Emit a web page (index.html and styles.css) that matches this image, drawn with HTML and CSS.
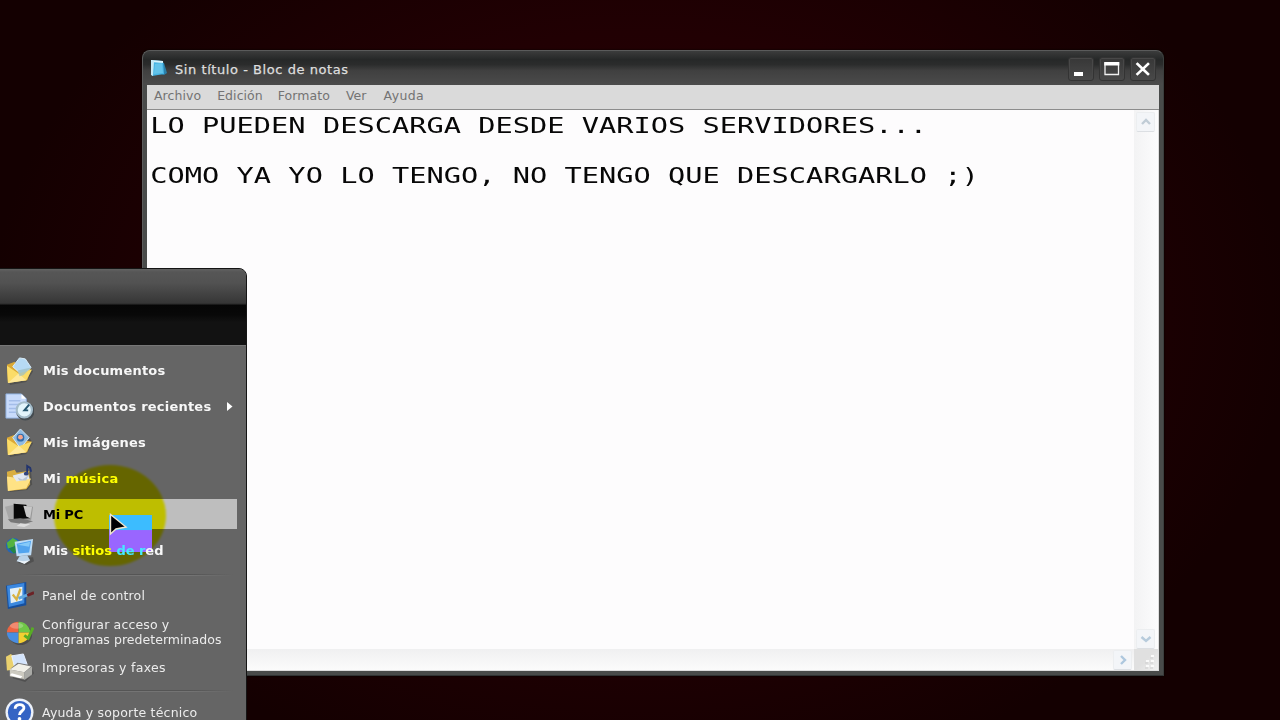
FILE: index.html
```
<!DOCTYPE html>
<html lang="es">
<head>
<meta charset="utf-8">
<title>Sin título - Bloc de notas</title>
<link rel="stylesheet" href="styles.css">
</head>
<body>
<main class="desktop">
  <section class="window">
    <header class="titlebar">
      <svg class="app-icon" width="18" height="18" viewBox="0 0 18 18"><path d="M11 3l3 1 3 10-3 2-3-1z" fill="#2b7fa9"/><path d="M1 1l12 1 1 13-12 2z" fill="#45b4e4"/><path d="M1 1l12 1v2L1 3z" fill="#d7f2fb"/><path d="M1 2h3L3 17l-2-1z" fill="#c5e9f5"/><path d="M5 5l7-1 1 10-9 1z" fill="#62c3ea"/></svg>
      <h1 class="title">Sin título - Bloc de notas</h1>
      <div class="controls">
        <span class="control"><svg width="26" height="24"><path d="M6 15h9v4H6z" fill="#fff"/></svg></span>
        <span class="control"><svg width="26" height="24"><path d="M6 6h13.500v11.500h-13.500z" fill="none" stroke="#f2f2f2" stroke-width="1.300"/><path d="M5.300 5h15v3.500h-15z" fill="#fff"/></svg></span>
        <span class="control"><svg width="26" height="24"><path d="M7.500 7l10.500 10M18 7L7.500 17" stroke="#fff" stroke-width="2.600" stroke-linecap="square"/></svg></span>
      </div>
    </header>
    <nav class="menubar"><span>Archivo</span><span>Edición</span><span>Formato</span><span>Ver</span><span>Ayuda</span></nav>
    <div class="editor">
      <div class="text">LO PUEDEN DESCARGA DESDE VARIOS SERVIDORES...

COMO YA YO LO TENGO, NO TENGO QUE DESCARGARLO ;)</div>
      <div class="vscroll">
        <span class="arrow"><svg width="20" height="20"><path d="M6 12l4-4 4 4" fill="none" stroke="#c0ccd6" stroke-width="2.400"/></svg></span>
        <span class="arrow"><svg width="20" height="20"><path d="M5.500 8l4.500 4 4.500-4" fill="none" stroke="#b7cbdc" stroke-width="2.400"/></svg></span>
      </div>
      <div class="hscroll"><span class="arrow"><svg width="20" height="20"><path d="M8 6l4 4-4 4" fill="none" stroke="#adc7de" stroke-width="2.400"/></svg></span></div>
      <div class="grip"><svg width="22" height="22"><path d="M17 7h3M12 12h3M17 12h3M12 17h3M17 17h3" stroke="#fafafa" stroke-width="2"/><path d="M16 9h3M11 14h3M16 14h3M11 19h3M16 19h3" stroke="#cfcfcf"/></svg></div>
    </div>
  </section>

  <aside class="start">
    <div class="start-head"></div>
    <div class="start-body">
      <div class="row places"><svg class="icon" viewBox="0 0 30 30"><path d="M5 14l8-8 13 5 3 5-7 11-17 3z" fill="#3a3a36" opacity=".45"/><path d="M2 9l8-3 3 6 14 2-4 11L3 27z" fill="#d9a936"/><path d="M8 11l7-9 6 1 6 9-9 8z" fill="#b6daf4" stroke="#dceffc"/><path d="M2 10l12 8 14-4-6 11-19 3z" fill="#fbdc68"/><path d="M3 28l11-10 8 7z" fill="#ffe99b"/><path d="M13 15l14-3-8 8-4 1z" fill="#9fc0c4" opacity=".75"/></svg><span class="label">Mis documentos</span></div>
      <div class="row places"><svg class="icon" viewBox="0 0 30 30"><path d="M1 2h16l5 5v20H1z" fill="#c8dbfb" stroke="#8fb0e0"/><path d="M17 2v5h5" fill="#fff"/><path d="M4 9h12M4 13h10M4 17h8M4 21h8" stroke="#a3bde9" stroke-width="1.500"/><circle cx="21" cy="20" r="9.500" fill="#444b50"/><circle cx="20" cy="18.500" r="9" fill="#a3bbc9"/><circle cx="20" cy="18.500" r="6.800" fill="#e2f4fb"/><path d="M25 13l-5 6h4" fill="none" stroke="#25566f" stroke-width="2"/></svg><span class="label">Documentos recientes</span><svg class="more" width="6" height="9"><path d="M0 0l5.500 4.500L0 9z" fill="#fff"/></svg></div>
      <div class="row places"><svg class="icon" viewBox="0 0 30 30"><path d="M5 14l8-8 13 5 3 5-7 11-17 3z" fill="#3a3a36" opacity=".45"/><path d="M2 10l8-3 3 5 14 2-4 11L3 28z" fill="#dba936"/><path d="M8 10l8-9 9 9-9 11z" fill="#8fbbe2" stroke="#d5e9fa"/><circle cx="16" cy="10" r="4" fill="#316dac"/><circle cx="16" cy="9.500" r="2.500" fill="#f4a38c"/><path d="M2 11l12 8 14-5-6 11-19 3z" fill="#fbdc68"/><path d="M3 28l11-10 8 7z" fill="#ffe99b"/></svg><span class="label">Mis imágenes</span></div>
      <div class="row places"><svg class="icon" viewBox="0 0 30 30"><path d="M5 12l22-4 1 13-5 6-18 2z" fill="#3a3a36" opacity=".45"/><path d="M2 8l8-2 2 3 13-2 1 14-4 5-19 2z" fill="#d9ae40"/><path d="M8 12l15-4 3 9-14 5z" fill="#e2e8f0"/><path d="M2 13l7 1 3 4 15-3-5 10-19 3z" fill="#ffe285"/><path d="M13 14l5 2 6-4-2 5h-7z" fill="#b9c5d5"/><path d="M23 10V2l3 2 1 4" fill="none" stroke="#22346e" stroke-width="2"/><ellipse cx="22" cy="10" rx="2.500" ry="2" fill="#31447e"/></svg><span class="label">Mi <b class="lit">música</b></span></div>
      <div class="row places selected"><svg class="icon" viewBox="0 0 30 30"><path d="M0 7l9-2v14l-5 1z" fill="#a7a7a7"/><path d="M9 4l20 3-2 14-17-1z" fill="#999"/><path d="M9 4l13 1 4 14-17 1z" fill="#080808"/><path d="M19 6l9 1-2 12-4-2z" fill="#c8c8c8"/><path d="M3 20l13-1 13 3-9 3-14-2z" fill="#777"/><path d="M16 24l10 1-6 3-8-1z" fill="#ddd"/></svg><span class="label">Mi PC</span></div>
      <div class="row places net"><svg class="icon" viewBox="0 0 30 30"><path d="M13 23l16-1 1 4-8 4-8-2z" fill="#333" opacity=".4"/><circle cx="9" cy="10" r="8" fill="#2466b5"/><path d="M2 7l6-5 5 3-4 6-6 2z" fill="#55b341"/><path d="M4 13l7-3 2 6-4 2z" fill="#248646"/><path d="M10 6l19-3-2 17-15 1z" fill="#bcdcf7"/><path d="M12 8l15-3-2 12-11 1z" fill="#52a4ee"/><path d="M13 9l13-3-1 5z" fill="#85caf9"/><path d="M15 21l8-1 3 5-7 3-7-2z" fill="#bad2e7"/><path d="M12 25l7 1 7-1-6 4z" fill="#ecf4fa"/></svg><span class="label">Mis <b class="lit">sitios</b> <b class="cyan">de r</b>ed</span></div>
      <div class="separator"></div>
      <div class="row tool"><svg class="icon" viewBox="0 0 30 30"><path d="M1 5l21-4v24L3 29z" fill="#164f9e"/><path d="M2 5l18-3v21L4 27z" fill="#3b88df"/><path d="M5 8l13-2v14L6 23z" fill="#e5f0f5"/><path d="M8 14l4 5 4-11" fill="none" stroke="#d8b343" stroke-width="2.400"/><path d="M14 18l10-4" stroke="#60a8df" stroke-width="3"/><path d="M23 15l7-3" stroke="#6c2125" stroke-width="3"/></svg><span class="label">Panel de control</span></div>
      <div class="row tool two"><svg class="icon" viewBox="0 0 30 30"><ellipse cx="16" cy="17" rx="12" ry="11" fill="#333" opacity=".5"/><path d="M14 15V4A12 11 0 0 0 2 15z" fill="#ed6542"/><path d="M14 15V4A12 11 0 0 1 26 15z" fill="#70c747"/><path d="M14 15v11A12 11 0 0 1 2 15z" fill="#498ee1"/><path d="M14 15v11A12 11 0 0 0 26 15z" fill="#f3cf32"/><ellipse cx="12" cy="8" rx="7" ry="3" fill="#fff" opacity=".25"/><path d="M20 18l4 3 5-11" fill="none" stroke="#58ac25" stroke-width="3"/></svg><span class="label">Configurar acceso y<br><i class="second">programas predeterminados</i></span></div>
      <div class="row tool printer"><svg class="icon" viewBox="0 0 30 30"><path d="M9 20l18-7 3 8-9 9-13-4z" fill="#333" opacity=".4"/><path d="M1 4l5-3 5 4v12l-9 1z" fill="#ead16e"/><path d="M7 3l12-2 4 11-13 3z" fill="#d3e4fc" stroke="#e8f1ff"/><path d="M6 16l7-6 15 3v10l-8 5-15-4z" fill="#777"/><path d="M5 17l9-6 13 3-7 6z" fill="#f1f0e8"/><path d="M5 17l15 3v7L5 24z" fill="#cccac0"/><path d="M20 20l8-6v8l-8 6z" fill="#a9aaa6"/><path d="M7 21l11 3-2 2-11-3z" fill="#fff"/></svg><span class="label">Impresoras y faxes</span></div>
      <div class="separator low"></div>
      <div class="row tool help"><svg class="icon" viewBox="0 0 30 30"><circle cx="15" cy="15" r="14.500" fill="#edf2fa"/><circle cx="15" cy="15" r="12" fill="#3564c4"/><path d="M10.500 11c0-6 10-5 9-.5 0 3-4.500 3-4.500 7" fill="none" stroke="#fff" stroke-width="3"/><circle cx="15" cy="21.500" r="1.900" fill="#fff"/></svg><span class="label">Ayuda y soporte técnico</span></div>
    </div>
    <div class="halo"></div>
    <div class="drag"></div>
    <svg class="pointer" width="20" height="24" viewBox="0 0 20 24"><path d="M1.500 1.500v19.500l5.500-5 10-2z" fill="#000" stroke="#f0e6cf" stroke-width="1.400"/></svg>
  </aside>
</main>
</body>
</html>
```
FILE: styles.css
```
* { box-sizing: border-box; }
body { margin: 0; font-family: "DejaVu Sans", sans-serif; }
.desktop { position: relative; width: 1280px; height: 720px; overflow: hidden; padding: 50px 0 0 142px; background: radial-gradient(ellipse 650px 480px at 640px 320px, #2c0005 0, #210003 60%, #140001 100%); }
.window { width: 1022px; height: 626px; padding: 0 4px 4px; display: flex; flex-direction: column; background: #494b4a; border: 1px solid #5a5b5b; border-bottom-color: #303333; border-right-color: #3b3e3d; border-radius: 8px 8px 0 0; box-shadow: 0 0 2px #000; }
.titlebar { flex: 0 0 34px; margin: 0 -4px; padding: 0 7px 0 7px; display: flex; align-items: center; border-radius: 7px 7px 0 0; background: linear-gradient(#3b3c3c 0, #262828 25%, #2b2c2c 40%, #404040 58%, #4b4b4b 100%); }
.app-icon { flex: none; }
.title { margin: 2px 0 0 7px; font-size: 13px; font-weight: 400; letter-spacing: .56px; color: #dedede; white-space: nowrap; -webkit-text-stroke: .25px #dedede; }
.controls { margin-left: auto; display: flex; gap: 5px; padding-top: 2px; }
.control { width: 26px; height: 24px; border: 1px solid #333; border-radius: 3px; background: linear-gradient(#373737, #494949); box-shadow: inset 0 0 0 1px #484848; display: flex; align-items: center; justify-content: center; }
.control svg { flex: none; }
.menubar { flex: 0 0 25px; display: flex; padding: 3px 0 0 7px; border-bottom: 1px solid #8c8c8c; background: #dadada; color: #737373; font-size: 12.5px; white-space: nowrap; }
.menubar span { margin-right: 16px; letter-spacing: .06px; }
.menubar span:nth-child(2) { margin-right: 15px; }
.menubar span:nth-child(4) { margin-right: 17px; }
.menubar span:nth-child(5) { letter-spacing: .4px; }
.editor { flex: 1; min-height: 0; display: grid; grid-template-columns: 1fr 24px; grid-template-rows: 1fr 21px; background: #fdfcfd; border: solid #dedede; border-width: 0 1px 1px 0; }
.text { padding: 3px 0 0 3px; font: 22px/25px "DejaVu Sans Mono", monospace; color: #070707; white-space: pre; transform: scaleX(1.303); transform-origin: 2px 0; width: 700px; }
.vscroll { display: flex; flex-direction: column; justify-content: space-between; align-items: center; padding: 2px 1px 0 0; background: linear-gradient(90deg, #f3f3f4, #fcfcfd); }
.arrow { width: 19px; height: 20px; border: 1px solid #eceef0; border-bottom-color: #dcdfe3; border-radius: 2px; background: #f3f5f8; display: flex; align-items: center; justify-content: center; }
.arrow svg { flex: none; }
.hscroll { display: flex; justify-content: flex-end; align-items: center; padding-right: 2px; background: linear-gradient(#f0f0f1, #fbfbfb); }
.grip { background: linear-gradient(135deg, #e0e0e0 50%, #f0f0f0); display: flex; overflow: hidden; }
.start { position: absolute; left: -8px; top: 268px; width: 255px; height: 460px; overflow: hidden; border: 1px solid #151515; border-radius: 8px 8px 0 0; background: #656565; isolation: isolate; }
.start-head { height: 76px; background: linear-gradient(#626262 0, #565656 4%, #525252 18%, #363636 45%, #060606 48%, #080808 60%, #121212 70%, #121212 100%); }
.start-body { padding: 7px 0 0 10px; border-top: 1px solid #777; }
.row { display: flex; align-items: center; color: #fff; white-space: nowrap; }
.icon { flex: none; width: 29px; height: 29px; margin-left: 2px; }
.label { position: relative; z-index: 3; margin-left: 9px; }
.places { width: 234px; height: 30px; margin-bottom: 6px; font-size: 13px; font-weight: 700; letter-spacing: .22px; color: #f7f7f7; }
.start-body > .places:first-child { margin-top: 2px; }
.places b { font-weight: 700; }
.start-body .selected { background: #bebebe; color: #000; letter-spacing: -.2px; }
.start-body .net { letter-spacing: -.03px; }
.more { margin-left: auto; margin-right: 4px; }
.lit { color: #ff0; }
.cyan { color: #46eaff; }
.separator { width: 216px; height: 2px; margin: 9px 0 6px 14px; background: linear-gradient(90deg, transparent, #555 20%, #555 80%, transparent) 0 0 / 100% 1px no-repeat, linear-gradient(90deg, transparent, #747474 20%, #747474 80%, transparent) 0 1px / 100% 1px no-repeat; }
.tool { height: 27px; font-size: 12.5px; line-height: 15px; letter-spacing: .15px; color: #ececec; }
.tool .label { margin-left: 8px; }
.two { height: 46px; }
.second { font-style: normal; letter-spacing: .04px; }
.printer { height: 25px; letter-spacing: .3px; }
.low { margin: 10px 0 9px 14px; }
.help { height: 22px; letter-spacing: .2px; }
.halo { position: absolute; z-index: 1; left: 61px; top: 196px; width: 112px; height: 101px; border-radius: 50%; background: #ff0; mix-blend-mode: multiply; filter: blur(1px); }
.drag { position: absolute; z-index: 2; left: 116px; top: 246px; width: 43px; height: 37px; background: linear-gradient(#3cbcff 40%, #9966ff 42%); }
.pointer { position: absolute; z-index: 4; left: 116px; top: 244px; }
```
